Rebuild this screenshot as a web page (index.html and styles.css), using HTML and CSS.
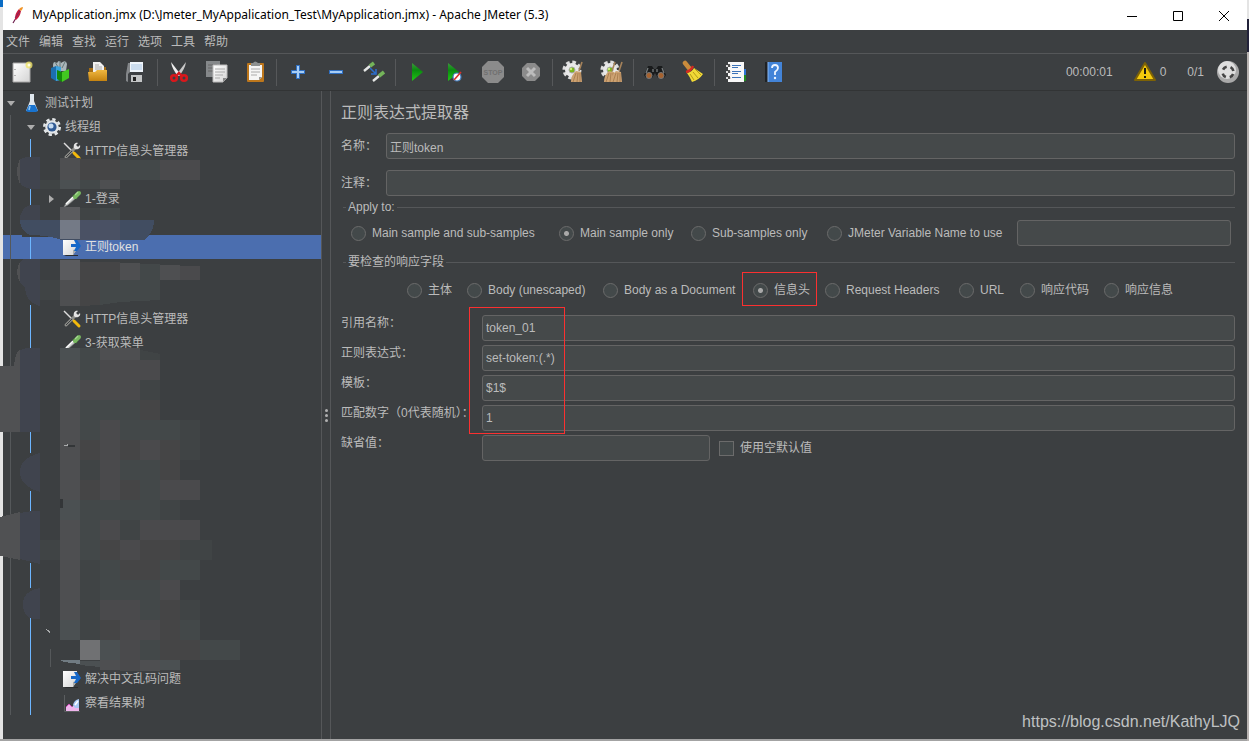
FILE: index.html
```html
<!DOCTYPE html>
<html lang="zh-CN">
<head>
<meta charset="utf-8">
<title>MyApplication.jmx - Apache JMeter (5.3)</title>
<link rel="stylesheet" href="styles.css">
</head>
<body>
<svg width="0" height="0" class="defs" aria-hidden="true">
  <defs>
    <linearGradient id="paper" x1="0" y1="0" x2="1" y2="1"><stop offset="0" stop-color="#fff"/><stop offset="1" stop-color="#d4d4d4"/></linearGradient>
    <linearGradient id="gold" x1="0" y1="0" x2="0" y2="1"><stop offset="0" stop-color="#f0b840"/><stop offset="1" stop-color="#c58310"/></linearGradient>
    <linearGradient id="green" x1="0" y1="0" x2="0" y2="1"><stop offset="0" stop-color="#3c9a3c"/><stop offset=".4" stop-color="#0a8a10"/><stop offset="1" stop-color="#20c814"/></linearGradient>
    <symbol id="tools" viewBox="0 0 20 20">
      <path d="M2 2L14 14" stroke="#ddd" stroke-width="1.4"/>
      <path d="M4 16L14 6" stroke="#8e8e8a" stroke-width="3" stroke-linecap="round"/><path d="M4 16L10 10" stroke="#3c3f41" stroke-width="1"/>
      <path d="M12 7C11 4 13 1 16 2L14 4L16 6L18 4C19 7 16 9 13 8Z" fill="#e4e4e4"/>
      <path d="M12 12L17 17" stroke="#f3b90c" stroke-width="3" stroke-linecap="round"/>
    </symbol>
    <symbol id="dropper" viewBox="0 0 20 20">
      <path d="M2 18L4 14L12 7L14 9L6 16Z" fill="#c9ccca" stroke="#77797a" stroke-width=".7"/>
      <path d="M4 15L11 8" stroke="#fff" stroke-width="1.3"/>
      <path d="M11 6L15 10" stroke="#3b6a35" stroke-width="1.6"/>
      <path d="M13 8L17 4" stroke="#78b860" stroke-width="4" stroke-linecap="round"/><path d="M13 6L16 3" stroke="#a6d992" stroke-width="1.2"/>
    </symbol>
    <symbol id="extract" viewBox="0 0 20 20">
      <path d="M2 18H16V19H4Z" fill="#2b2d2e"/>
      <path d="M1 2H15V12L11 18H1Z" fill="url(#paper)"/><path d="M15 12L11 18L11 13Z" fill="#a9acad"/>
      <path d="M9 7H14L12 3H15L19 9L15 14H12L14 10H9Z" fill="#1567c8"/>
    </symbol>
    <symbol id="gear" viewBox="0 0 20 20">
      <circle cx="10" cy="10" r="7.7" fill="none" stroke="#e3e6e8" stroke-width="2.6" stroke-dasharray="3.3 2.75"/>
      <circle cx="10" cy="10" r="6.8" fill="#e3e6e8"/><circle cx="10" cy="10" r="4.6" fill="#305a94"/><circle cx="9" cy="9" r="2.5" fill="#c6dcf2"/>
    </symbol>
    <symbol id="broomgear" viewBox="0 0 24 24">
      <circle cx="10" cy="10" r="7.5" fill="none" stroke="#dedede" stroke-width="4" stroke-dasharray="3.4 2.5"/>
      <circle cx="10" cy="10" r="7" fill="#e8e8e8"/><circle cx="10" cy="10" r="3" fill="#7ab51c" stroke="#a9aaa8"/>
      <circle cx="9" cy="9" r="1.2" fill="#cdf07a"/>
    </symbol>
    <symbol id="brush" viewBox="0 0 24 24">
      <path d="M20 2L17 11" stroke="#a5825a" stroke-width="1.6"/>
      <path d="M14 11L19 12L20 22L9 22Q9 15 14 11Z" fill="#cda272"/>
      <path d="M14 13L11 22M16 13L15 22M18 13L18 22" stroke="#94693b" stroke-width=".6"/>
    </symbol>
  </defs>
</svg>

<div class="window">
  <header class="titlebar">
    <svg class="app-icon" viewBox="0 0 12 18"><path d="M1 17L4 12" stroke="#6d1d4c" stroke-width="1.2"/><path d="M3 13Q3 7 7 3L9 5Q8 11 4 14Z" fill="#c51d3d"/><path d="M7 3Q9 1 11 1Q11 3 9 5Z" fill="#f19427"/><path d="M3 12L8 5" stroke="#70266a" stroke-width=".8"/></svg>
    <h1 class="title">MyApplication.jmx (D:\Jmeter_MyAppalication_Test\MyApplication.jmx) - Apache JMeter (5.3)</h1>
    <button class="win-btn" aria-label="Minimize"><svg viewBox="0 0 12 12"><path d="M1 6.5H11"/></svg></button>
    <button class="win-btn" aria-label="Maximize"><svg viewBox="0 0 12 12"><path d="M1.5 1.5H10.500V10.500H1.500Z"/></svg></button>
    <button class="win-btn" aria-label="Close"><svg viewBox="0 0 12 12"><path d="M1 1L11 11M11 1L1 11"/></svg></button>
  </header>

  <nav class="menubar">
    <button>文件</button><button>编辑</button><button>查找</button><button>运行</button><button>选项</button><button>工具</button><button>帮助</button>
  </nav>

  <div class="toolbar">
    <button aria-label="New"><svg viewBox="0 0 24 24"><path d="M3 3H20V22H3Z" fill="url(#paper)" stroke="#a8a8a8"/><path d="M5 9v1M5 15v1" stroke="#777"/><circle cx="19" cy="5" r="3.5" fill="#efe46a" opacity=".8"/><circle cx="19" cy="5" r="1.5" fill="#fffde0"/></svg></button>
    <button aria-label="Templates"><svg viewBox="0 0 24 24"><path d="M5 6Q5 0 9 3Q11 -1 13 3Q18 -1 19 4L18 11H6Z" fill="#aab6ba"/><path d="M7 2L10 7M12 1V7M17 2L14 8" stroke="#677" stroke-width="1"/><path d="M3 8L8 6V21L3 18Z" fill="#1c6fae"/><path d="M8 6L13 7V20L8 21Z" fill="#3ba3df"/><path d="M9 10L14 12V22L9 19Z" fill="#14890a"/><path d="M14 12L21 9V18L14 22Z" fill="#42c820"/></svg></button>
    <button aria-label="Open"><svg viewBox="0 0 24 24"><path d="M3 8H8V7H20V19H3Z" fill="#a46d14"/><path d="M7 2H14L18 6V14H7Z" fill="#f1f1f1"/><path d="M9 5H13M9 7H16M9 9H16" stroke="#aaa"/><path d="M2 12H9L11 10H21V21H3Z" fill="url(#gold)"/></svg></button>
    <button aria-label="Save"><svg viewBox="0 0 24 24"><path d="M4 3H20L22 14V22H2V14Z" fill="#3d4043"/><path d="M4 3L2 14V21L4 22V14L6 12V3Z" fill="#84878a"/><path d="M6 2H19V12H6Z" fill="#eef4fa"/><path d="M7 5H18M7 7H18M7 9H18" stroke="#a7c4e2"/><path d="M7 15H18V22H7Z" fill="#c3c5c6"/><path d="M9 17H12V21H9Z" fill="#222"/></svg></button>
    <span class="sep"></span>
    <button aria-label="Cut"><svg viewBox="0 0 24 24"><path d="M4 2L14 15L11 16Q5 9 4 2Z" fill="#eee"/><path d="M19 2L9 15L12 16Q18 9 19 2Z" fill="#c9c9c9"/><g fill="none" stroke="#d8181c" stroke-width="2.6"><circle cx="7" cy="18" r="2.8"/><circle cx="17" cy="18" r="2.8"/></g><path d="M9 16L12 13L15 16" stroke="#d8181c" stroke-width="2.4" fill="none"/></svg></button>
    <button aria-label="Copy"><svg viewBox="0 0 24 24"><path d="M1 1H15V17H1Z" fill="#85888a"/><path d="M3 5H12M3 8H12M3 11H12" stroke="#666"/><path d="M8 5H22V18L18 22H8Z" fill="url(#paper)" stroke="#bbb"/><path d="M10 9H20M10 12H20M10 15H18M10 18H15" stroke="#aaa"/><path d="M18 22V18H22Z" fill="#888"/></svg></button>
    <button aria-label="Paste"><svg viewBox="0 0 24 24"><rect x="4" y="3" width="17" height="19" rx="1" fill="#bd771c"/><path d="M6 5H19V17L16 20H6Z" fill="#f5f5f5"/><path d="M8 9H17M8 12H17M8 15H14" stroke="#aaa"/><path d="M8 6V3H10Q12 0 15 3H17V6Z" fill="#8d9090"/><path d="M16 20V17H19Z" fill="#999"/></svg></button>
    <span class="sep"></span>
    <button aria-label="Expand"><svg viewBox="0 0 24 24"><path d="M12 5V19M5 12H19" stroke="#2f6fc2" stroke-width="4"/><path d="M12 6V18M6 12H18" stroke="#a7cdf5" stroke-width="2"/></svg></button>
    <button aria-label="Collapse"><svg viewBox="0 0 24 24"><path d="M5 12H19" stroke="#2f6fc2" stroke-width="4"/><path d="M6 12H18" stroke="#a7cdf5" stroke-width="2"/></svg></button>
    <button aria-label="Toggle"><svg viewBox="0 0 24 24"><path d="M2 11L8 6" stroke="#e5e7e5" stroke-width="2.4"/><path d="M8 6L12 3" stroke="#74b45a" stroke-width="3.6"/><path d="M11 21L17 16" stroke="#e5e7e5" stroke-width="2.4"/><path d="M17 16L22 12" stroke="#74b45a" stroke-width="3.6"/><path d="M8 8L13 13M14 9V14H9" stroke="#2c6fce" stroke-width="1.5" fill="none"/></svg></button>
    <span class="sep"></span>
    <button aria-label="Start"><svg viewBox="0 0 24 24"><path d="M7 3L18 12L7 21Z" fill="url(#green)"/></svg></button>
    <button aria-label="Start no pauses"><svg viewBox="0 0 24 24"><path d="M5 3L16 12L5 21Z" fill="url(#green)"/><circle cx="14" cy="17" r="4" fill="#fff" stroke="#3c78b9" stroke-width="1.2"/><path d="M11 20L18 12" stroke="#d8312b" stroke-width="1.6"/></svg></button>
    <button aria-label="Stop"><svg viewBox="0 0 24 24"><path d="M7 1H17L23 7V17L17 23H7L1 17V7Z" fill="#8b8b8b"/><text x="12" y="15" text-anchor="middle" class="stop-text">STOP</text></svg></button>
    <button aria-label="Shutdown"><svg viewBox="0 0 24 24"><path d="M8 3H16L21 8V16L16 21H8L3 16V8Z" fill="#8b8b8b"/><path d="M8 8L16 16M16 8L8 16" stroke="#bcbcbc" stroke-width="3"/></svg></button>
    <span class="sep"></span>
    <button aria-label="Clear"><svg viewBox="0 0 24 24"><use href="#broomgear"/><use href="#brush"/></svg></button>
    <button aria-label="Clear all"><svg viewBox="0 0 24 24"><use href="#broomgear"/><use href="#brush" x="-5"/><use href="#brush" x="2"/></svg></button>
    <span class="sep"></span>
    <button aria-label="Search"><svg viewBox="0 0 24 24"><path d="M5 6H9L11 9H13L15 6H19L23 15L21 18H15L12 13L9 18H3L1 15Z" fill="#191b1c"/><path d="M5 8L3 13M19 8L21 13M10 9V12M14 9V12" stroke="#777c7e" stroke-width="1.3"/><circle cx="6" cy="15.5" r="3" fill="#a6622f" stroke="#787878"/><circle cx="18" cy="15.5" r="3" fill="#a6622f" stroke="#787878"/></svg></button>
    <button aria-label="Reset search"><svg viewBox="0 0 24 24"><path d="M4 3L8 8" stroke="#c98b3c" stroke-width="4.5" stroke-linecap="round"/><path d="M6 13Q11 12 13 8L22 14Q18 20 11 22Q9 17 6 13Z" fill="#f1d936"/><path d="M9 14L13 20M12 12L17 18M14 9L20 15" stroke="#a68a12" stroke-width=".8"/><path d="M5 12Q10 11 12 6" stroke="#d42a20" stroke-width="2.4" fill="none"/></svg></button>
    <span class="sep"></span>
    <button aria-label="Function helper"><svg viewBox="0 0 24 24"><path d="M17 9H22V15H17Z" fill="#2e75d4"/><path d="M17 15H22V21H17Z" fill="#208a20"/><path d="M4 2H20V22H4Z" fill="#f8f8f8"/><path d="M2 6H7M2 12H7M2 18H7" stroke="#d8d8d8" stroke-width="2"/><path d="M5 4V7M5 10V13M5 16V19" stroke="#222" stroke-width="1.5"/><path d="M8 5.5H17M8 7.5H14M8 11.5H17M8 13.5H14M8 17.500H17" stroke="#3c73b8"/></svg></button>
    <button aria-label="Help"><svg viewBox="0 0 24 24"><path d="M3 2H8V22H3Z" fill="#202224"/><path d="M6 2H20V22H6Z" fill="#4384d8"/><path d="M6 2V22" stroke="#8ab7ef"/><path d="M10 8Q10 5 13 5Q16 5 16 8Q16 10 13 12V15" fill="none" stroke="#eef5ff" stroke-width="1.800"/><circle cx="13" cy="18" r="1.200" fill="#eef5ff"/></svg></button>
    <div class="status">
      <span class="clock">00:00:01</span>
      <svg class="warn" viewBox="0 0 24 24"><path d="M12 3L22 20H2Z" fill="#f3c90d" stroke="#7d6206" stroke-width="2" stroke-linejoin="round"/><path d="M12 8V14M12 16V18" stroke="#1c1a10" stroke-width="2"/></svg>
      <span class="errors">0</span>
      <span class="threads">0/1</span>
      <svg class="globe" viewBox="0 0 24 24"><circle cx="12" cy="12" r="11" fill="#a9a9a9"/><circle cx="11" cy="10" r="9" fill="#dedede"/><circle cx="12" cy="12" r="5.5" fill="none" stroke="#444" stroke-width="2.6" stroke-dasharray="4.600 4.040" stroke-dashoffset="-2"/></svg>
    </div>
  </div>

  <main class="split">
    <ul class="tree">
      <li class="row l1"><svg class="arrow" viewBox="0 0 10 10"><path d="M1 3H9L5 8Z"/></svg><svg class="icon" viewBox="0 0 20 20"><path d="M8 1H12V8L16 18H4L8 8Z" fill="#dfe7ee"/><path d="M7 12H13L16 18L14 19H6L4 18Z" fill="#1873cf"/><path d="M8 13L7 17" stroke="#8bc4f5" stroke-width="1.5"/></svg>测试计划</li>
      <li class="row l2"><svg class="arrow" viewBox="0 0 10 10"><path d="M1 3H9L5 8Z"/></svg><svg class="icon"><use href="#gear"/></svg>线程组</li>
      <li class="row l3"><span class="arrow"></span><svg class="icon"><use href="#tools"/></svg>HTTP信息头管理器</li>
      <li class="row"></li>
      <li class="row l3"><svg class="arrow" viewBox="0 0 10 10"><path d="M3 1L8 5L3 9Z"/></svg><svg class="icon"><use href="#dropper"/></svg>1-登录</li>
      <li class="row"></li>
      <li class="row l3 selected"><span class="arrow"></span><svg class="icon"><use href="#extract"/></svg>正则token</li>
      <li class="row"></li>
      <li class="row"></li>
      <li class="row l3"><span class="arrow"></span><svg class="icon"><use href="#tools"/></svg>HTTP信息头管理器</li>
      <li class="row l3"><span class="arrow"></span><svg class="icon"><use href="#dropper"/></svg>3-获取菜单</li>
      <li class="row covered"></li>
      <li class="row l3"><span class="arrow"></span><svg class="icon"><use href="#extract"/></svg>解决中文乱码问题</li>
      <li class="row l3"><span class="arrow"></span><svg class="icon" viewBox="0 0 20 20"><path d="M2.500 2V18.500H18" stroke="#5b5e60" fill="none"/><path d="M4 18V14L7 11L10 14L13 11L17 14V18Z" fill="#efb5ec"/><path d="M4 14L7 11L10 14" stroke="#cf4ab8" fill="none"/><path d="M11 12Q12 7 17 6V15L13 15Z" fill="#a9c9f5"/><path d="M13 12L16 8" stroke="#fff" stroke-width="1.500"/></svg>察看结果树</li>
    </ul>
    <div class="divider"><i></i><i></i><i></i></div>

    <section class="editor">
      <h2>正则表达式提取器</h2>
      <div class="field"><label for="name">名称：</label><input id="name" type="text" value="正则token"></div>
      <div class="field"><label for="comment">注释：</label><input id="comment" type="text"></div>

      <fieldset>
        <legend>Apply to:</legend>
        <div class="scope">
          <label><input type="radio" name="scope">Main sample and sub-samples</label>
          <label><input type="radio" name="scope" checked>Main sample only</label>
          <label><input type="radio" name="scope">Sub-samples only</label>
          <label><input type="radio" name="scope">JMeter Variable Name to use</label>
          <input type="text" aria-label="JMeter Variable Name">
        </div>
      </fieldset>

      <fieldset>
        <legend>要检查的响应字段</legend>
        <div class="source">
          <label><input type="radio" name="source">主体</label>
          <label><input type="radio" name="source">Body (unescaped)</label>
          <label><input type="radio" name="source">Body as a Document</label>
          <label class="marked"><input type="radio" name="source" checked>信息头</label>
          <label><input type="radio" name="source">Request Headers</label>
          <label><input type="radio" name="source">URL</label>
          <label><input type="radio" name="source">响应代码</label>
          <label><input type="radio" name="source">响应信息</label>
        </div>
      </fieldset>

      <div class="params">
        <label for="ref">引用名称：</label><input id="ref" type="text" value="token_01">
        <label for="regex">正则表达式：</label><input id="regex" type="text" value="set-token:(.*)">
        <label for="template">模板：</label><input id="template" type="text" value="$1$">
        <label for="match">匹配数字（0代表随机）：</label><input id="match" type="text" value="1">
        <label for="default">缺省值：</label>
        <div class="default"><input id="default" type="text"><label class="check"><input type="checkbox">使用空默认值</label></div>
      </div>
    </section>
  </main>
</div>

<svg class="overlay" width="330" height="741" viewBox="0 0 330 741" shape-rendering="crispEdges" aria-hidden="true">
  <path d="M10.500 115V715M50.500 649V667" stroke="#55585a"/>
  <path d="M30.500 139V715" stroke="#6db6ff"/>
  <g fill="#3c3f41">
    <path d="M22 157H60V189H22ZM22 205H60V237H22ZM22 259H60V305H28ZM20 348H60V432H20ZM24 453H60V491H24ZM20 511H60V563H20ZM26 588H50V618H26Z"/>
  </g>
  <path fill="#505153" d="M0 366H14Q15 352 20 350V432H0ZM0 517L20 512V560L0 556ZM20 159Q14 172 20 184ZM20 262Q14 272 20 282Z"/>
  <path fill="#40444e" d="M20 159L27 157H40V189H31Q20 186 20 182ZM20 216Q23 207 30 205H40V221H20ZM20 262L24 259H40V306Q26 303 25 287L20 283ZM20 350L26 348H40V432H20ZM40 453Q20 458 20 472Q20 486 40 492ZM20 513L32 511H40V564L20 559ZM40 588Q23 591 23 604Q23 618 35 619H40Z"/>
  <path fill="#414d61" d="M20 220H154Q154 233 144 240H62Q48 235 30 235Q20 231 20 220Z"/>
  <path fill="#4a5164" d="M80 220H120V240H80Z"/>
  <path fill="#747a86" d="M60 220H80V239H60Z"/>
  <path fill="#5a5b5e" d="M60 207H80V220H60ZM60 260H80V280H60Z"/>
  <path fill="#4e4f51" d="M60 158H80V180H60ZM100 180H120V189H100ZM120 263H140V280H120ZM160 265H180V280H160ZM60 280H80V306H60ZM100 348H140V360H100ZM60 360H80V380H60ZM60 400H80V500H60ZM60 520H80V620H60ZM100 660H120V670H100ZM140 660H160V671H140Z"/>
  <path fill="#4b5052" d="M60 348H80V360H60ZM60 380H80V400H60ZM60 500H80V520H60ZM60 620H80V640H60ZM60 180H80V189H60ZM100 640H120V660H100ZM80 661H100V667L80 665ZM160 660H180V670H160Z"/>
  <path fill="#4a4a4c" d="M160 160H200V180H160ZM180 266H200V280H180ZM100 360H160V380H100ZM80 380H140V400H80ZM100 420H120V500H100ZM140 440H160V460H140ZM160 480H200V500H160ZM100 520H120V540H100ZM140 520H200V540H140ZM120 540H140V560H120ZM160 580H180V600H160ZM100 600H140V620H100ZM120 620H160V640H120ZM120 640H140V660H120ZM120 660H140V671H120Z"/>
  <path fill="#454546" d="M80 159H120V180H80ZM80 262H120V280H80ZM80 280H100V305L80 306ZM140 400H160V420H140ZM80 440H100V460H80ZM120 440H140V460H120ZM160 440H180V480H160ZM80 480H100V500H80ZM120 480H140V500H120ZM100 540H120V560H100ZM140 540H180V560H140ZM120 560H160V580H120ZM160 600H180V640H160ZM100 620H120V640H100ZM160 640H200V660H160Z"/>
  <path fill="#434849" d="M120 160H160V180H120ZM80 180H100V189H80ZM100 208H120V220H100ZM140 264H160V280H140ZM100 280H160V300L120 302L100 305ZM80 348H100V380H80ZM80 400H140V420H80ZM80 420H100V440H80ZM120 420H180V440H120ZM120 460H160V480H120ZM140 480H160V500H140ZM80 500H160V520H80ZM80 520H100V560H80ZM100 560H120V600H100ZM160 560H200V580H160ZM120 580H160V600H120ZM140 600H160V620H140ZM180 620H200V640H180ZM140 640H160V660H140ZM200 640H240V660H200Z"/>
  <path fill="#404445" d="M40 180H60V189H40ZM80 208H100V220H80ZM40 280H60V300H40ZM140 350L160 354V360H140ZM140 380H160V400H140ZM180 420H200V440H180ZM180 440H200V460H180ZM80 460H100V480H80ZM160 500H180V520H160ZM120 520H140V540H120ZM40 540H60V560H40ZM180 540H212V560H180ZM80 560H100V640H80ZM180 600H200V620H180Z"/>
  <path fill="#707173" d="M80 640H100V660H80Z"/>
  <path fill="#707b82" d="M60 660H80V664L64 662Z"/>
  <path fill="#a9abac" d="M63 446L68 444V446ZM46 629L50 631V634Z"/>
  <path fill="#333638" d="M68 445H75V447H68ZM60 499H63V508H60Z"/>
</svg>
<p class="watermark">https://blog.csdn.net/KathyLJQ</p>
</body>
</html>
```
FILE: styles.css
```css
*, *::after { box-sizing: border-box; }

body {
  position: relative;
  display: flex;
  min-height: 100vh;
  margin: 0;
  padding: 0 2px 2px 3px;
  background:
    linear-gradient(#e4e4e4 0 19px, #23233a 19px 52px, #b9b4b2 52px) right top / 2px 100% no-repeat,
    linear-gradient(#0a6cc4 0 7px, #e4e4e4 7px calc(100% - 2px), #a3a3a3 calc(100% - 2px));
  color: #bbbbbb;
  font: 12px/16px "Liberation Sans", "Noto Sans CJK SC", sans-serif;
}

button, input { font: inherit; color: inherit; }
button { padding: 0; border: 0; background: none; }
h1, h2, p, ul { margin: 0; padding: 0; font-weight: normal; }
.defs { position: absolute; }

.window {
  flex: 1;
  display: flex;
  flex-direction: column;
  min-width: 0;
  background: #3c3f41;
}

.titlebar {
  display: flex;
  align-items: center;
  height: 30px;
  padding-left: 9px;
  background: #fff;
  color: #000;
}
.app-icon { width: 12px; height: 18px; }
.title { flex: 1; margin-left: 8px; font: 12px/16px "Noto Sans", "Open Sans", sans-serif; white-space: nowrap; }
.win-btn { width: 46px; height: 30px; }
.win-btn svg { width: 12px; height: 12px; fill: none; stroke: #000; vertical-align: middle; }

.menubar {
  display: flex;
  gap: 9px;
  height: 24px;
  padding: 0 3px;
  border-bottom: 1px solid #555759;
}

.toolbar {
  display: flex;
  align-items: center;
  height: 37px;
  border-bottom: 1px solid #323435;
}
.toolbar button { width: 38px; height: 34px; }
.toolbar button svg { width: 24px; height: 24px; vertical-align: middle; }
.sep { width: 1px; height: 27px; margin: 0 2px; background: #56585a; }
.stop-text { font: bold 7px "Liberation Sans", sans-serif; fill: #707070; }

.status { display: flex; align-items: center; margin-left: auto; padding-right: 7px; }
.warn { width: 24px; height: 24px; margin-left: 20px; }
.errors { margin-left: 3px; }
.threads { margin-left: 21px; }
.globe { width: 24px; height: 24px; margin-left: 12px; }

.split { flex: 1; display: flex; min-height: 0; }
.tree { width: 319px; border-right: 1px solid #555759; list-style: none; }
.row { display: flex; align-items: center; height: 24px; padding-left: 3px; white-space: nowrap; }
.l2 { padding-left: 23px; }
.l3 { padding-left: 43px; }
.covered { height: 312px; }
.selected { background: #4b6eaf; color: #e0e0e0; }
.arrow { width: 10px; height: 10px; margin-right: 6px; fill: #adadad; }
.icon { width: 20px; height: 20px; margin-right: 3px; }

.divider {
  display: flex;
  flex-direction: column;
  align-items: center;
  justify-content: center;
  gap: 2px;
  width: 9px;
  border-right: 1px solid #555759;
}
.divider i { width: 3px; height: 3px; border-radius: 50%; background: #b0b0b0; }

.editor { flex: 1; min-width: 0; padding: 10px 12px 10px 10px; }
h2 { margin-bottom: 8px; font-size: 16px; line-height: 24px; }

input[type="text"] {
  width: 100%;
  min-width: 0;
  height: 26px;
  padding: 0 3px;
  border: 1px solid #646464;
  border-radius: 3px;
  background: #45494a;
}
.field { display: grid; grid-template-columns: 45px 1fr; align-items: center; margin-bottom: 11px; }

fieldset { min-width: 0; margin: 0 0 8px 2px; padding: 0 4px 0 8px; border: 0; border-top: 1px solid #555759; }
.field + fieldset { margin-top: -8px; }
legend { margin-left: -5px; padding: 0 2px; line-height: 16px; }

.scope, .source { display: grid; align-items: center; white-space: nowrap; }
.scope { grid-template-columns: 208px 132px 136px 190px 1fr; padding-top: 5px; }
.source { grid-template-columns: 60px 136px 150px 72px 134px 61px 84px 1fr; padding: 7px 0 4px 56px; }
.scope label, .source label, .check { position: relative; display: flex; align-items: center; gap: 6px; height: 26px; }

input[type="radio"], input[type="checkbox"] {
  appearance: none;
  flex: none;
  width: 15px;
  height: 15px;
  margin: 0;
  border: 1px solid #6b6b6b;
  background: #43494a;
}
input[type="radio"] { border-radius: 50%; }
input[type="radio"]:checked { background: radial-gradient(circle, #a9a9a9 0 2px, #43494a 3px); }

.marked::after {
  content: "";
  position: absolute;
  top: -5px;
  left: -11px;
  width: 75px;
  height: 34px;
  border: 1px solid #fb3030;
}

.params {
  position: relative;
  display: grid;
  grid-template-columns: 141px 1fr;
  row-gap: 4px;
  align-items: start;
  white-space: nowrap;
}
.params::after {
  content: "";
  position: absolute;
  top: -8px;
  left: 128px;
  width: 96px;
  height: 127px;
  border: 1px solid #fb3030;
}
.default { display: flex; gap: 9px; }
.default input[type="text"] { width: 228px; }

.overlay { position: absolute; top: 0; left: 0; pointer-events: none; }
.watermark { position: absolute; right: 9px; bottom: 9px; color: #bfc1c2; font-size: 16px; line-height: 20px; }
```
